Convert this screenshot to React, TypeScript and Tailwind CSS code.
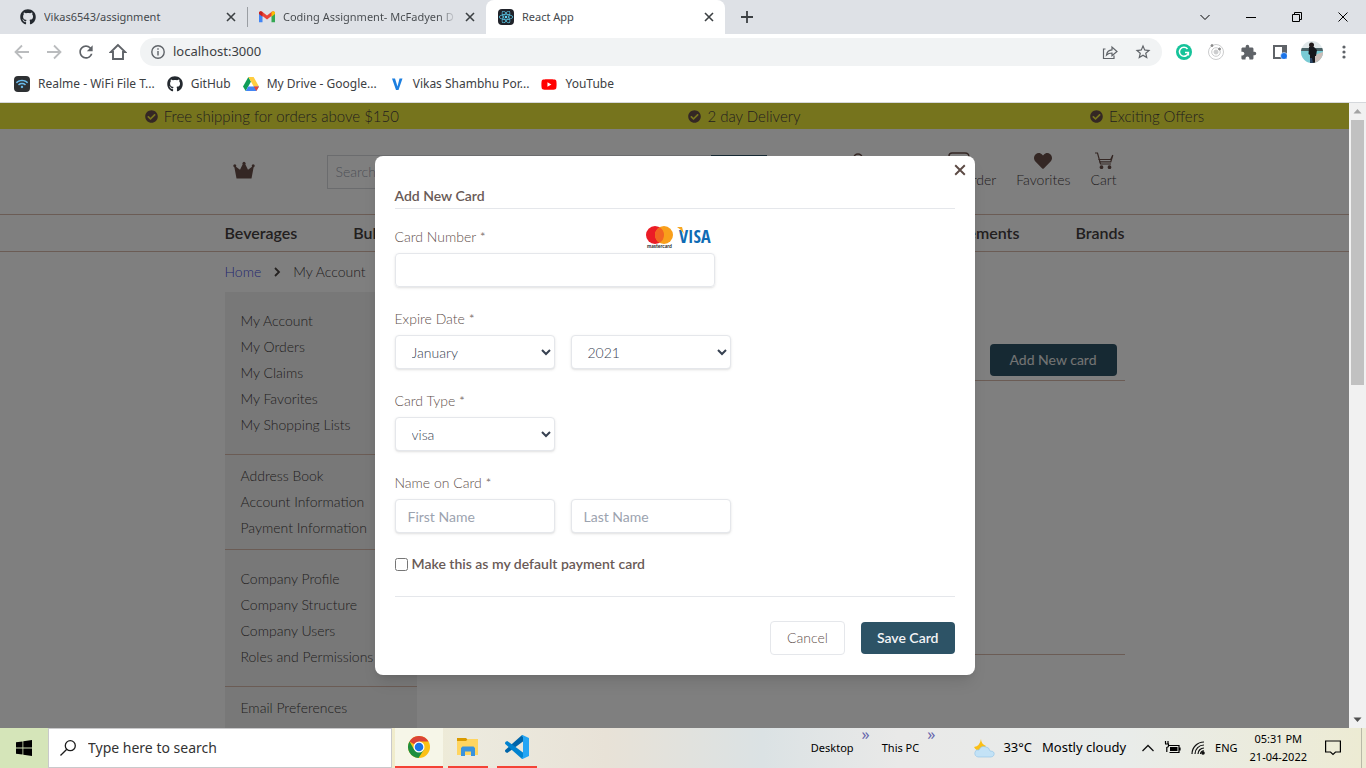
import React from "react";
import { FaCheckCircle, FaGithub, FaHeart, FaReact, FaWifi, FaYoutube } from "react-icons/fa";
import { MdExtension, MdRefresh, MdStarBorder } from "react-icons/md";

type Kids = { children?: React.ReactNode };

function GmailIcon() {
  return (
    <svg viewBox="0 0 16 12" className="h-3 w-4">
      <path d="M0 2v9.2h3.5V5z" fill="#4285f4" />
      <path d="M16 2v9.2h-3.5V5z" fill="#34a853" />
      <path d="M0 2.2C0 .3 2 0 3.2.8L8 4.5 12.8.8C14 0 16 .3 16 2.2L8 8.6z" fill="#ea4335" />
      <path d="M12.5 1v4.8L16 3V2C16 .2 14-.1 12.5 1z" fill="#fbbc04" />
      <path d="M3.5 1v4.8L0 3V2C0 .2 2-.1 3.5 1z" fill="#c5221f" />
    </svg>
  );
}

function DriveIcon() {
  return (
    <svg viewBox="0 0 16 14" className="h-3.5 w-4">
      <path d="M5.4 0 0 9.4 2.7 14 8 4.6z" fill="#0f9d58" />
      <path d="M5.4 0h5.2L16 9.4h-5.3z" fill="#ffcd40" />
      <path d="M5.3 9.4H16L13.3 14H2.7z" fill="#4285f4" />
      <path d="M10.7 9.4H16L13.3 14z" fill="#ea4335" />
    </svg>
  );
}

function ChromeIcon() {
  return (
    <svg viewBox="0 0 24 24" className="size-[22px]">
      <circle cx="12" cy="12" r="12" fill="#fbc116" />
      <path d="M12 12 1.6 6A12 12 0 0 1 22.4 6H12z" fill="#db4437" />
      <path d="M1.6 6A12 12 0 0 0 11.5 24l5.7-9H12L6.8 15z" fill="#1e8e3e" />
      <circle cx="12" cy="12" r="6" fill="#fff" />
      <circle cx="12" cy="12" r="4.7" fill="#1a73e8" />
    </svg>
  );
}

function ExplorerIcon() {
  return (
    <svg viewBox="0 0 22 20" className="h-5 w-[22px]">
      <path d="M0 1h9l2 2v3H0z" fill="#d99a00" />
      <path d="M0 4h9l2-2h10v16H0z" fill="#ffd560" />
      <path d="M4 19v-8l1.5-1.5h11L18 11v8h-4v-4.500H8V19z" fill="#3a93dd" />
    </svg>
  );
}

function CodeIcon() {
  return (
    <svg viewBox="0 0 24 24" className="size-6">
      <path d="M0 15.200 16.500.6 18 0v6.500L2.200 18 .3 17z" fill="#0065a9" />
      <path d="M0 8.800 16.500 23.400 18 24v-6.500L2.200 6 .3 7z" fill="#0082cf" />
      <path d="M17.500 0 24 3v18l-6.500 3-1-1 1.500-1V2l-1.500-1z" fill="#24a5f4" />
    </svg>
  );
}

function CrownIcon() {
  return (
    <svg viewBox="0 0 22 18" className="h-[18px] w-[22px]" fill="#694f49">
      <path d="M3.500 17.500 1 4.200 7 8.800 10.300 2h1.400L15 8.800l6-4.600-2.500 13.300z" />
      <circle cx="11" cy="2.200" r="1.500" />
      <circle cx="1.800" cy="4.700" r="1.500" />
      <circle cx="20.200" cy="4.700" r="1.500" />
    </svg>
  );
}

function CartIcon() {
  return (
    <svg viewBox="0 0 20 18" className="h-[18px] w-5" fill="none" stroke="#694f49" strokeWidth="1.200">
      <path d="M1 1h2.500l3 11H17" />
      <path d="M4.500 7.500h12.200L18.800 3M5.300 9.800h11.500l2-6.500" />
      <circle cx="7.500" cy="15.200" r="1.300" fill="#694f49" />
      <circle cx="15.500" cy="15.200" r="1.300" fill="#694f49" />
    </svg>
  );
}

function Cross({ className }: { className: string }) {
  return (
    <svg viewBox="0 0 10 10" className={className} fill="none" stroke="currentColor" strokeWidth="1.600">
      <path d="m1 1 8 8M9 1 1 9" />
    </svg>
  );
}

function Tab({ icon, title, active, fade }: { icon: React.ReactNode; title: string; active?: boolean; fade?: boolean }) {
  return (
    <div className={`flex h-[34px] w-[239px] shrink-0 items-center gap-2 pr-2.5 pl-3 text-[11px] ${active ? "rounded-t-lg bg-white" : ""}`}>
      <span className="flex size-4 shrink-0 items-center justify-center">{icon}</span>
      <span className={`flex-1 overflow-hidden whitespace-nowrap ${fade ? "bg-linear-to-r from-[#45494d] from-90% to-[#dee1e6] bg-clip-text text-transparent" : "text-[#45494d]"}`}>{title}</span>
      <button type="button" aria-label="Close tab" className="flex size-3 shrink-0 items-center justify-center text-[#3c4043]">
        <Cross className="size-2.5" />
      </button>
    </div>
  );
}

function ToolButton({ label, children }: Kids & { label: string }) {
  return (
    <button type="button" aria-label={label} className="flex h-7 w-8 shrink-0 items-center justify-center text-[#5f6368]">
      {children}
    </button>
  );
}

function Bookmark({ icon, children }: Kids & { icon: React.ReactNode }) {
  return (
    <a href="#" className="flex items-center gap-2">
      <span className="flex size-4 items-center justify-center">{icon}</span>
      {children}
    </a>
  );
}

function Browser() {
  return (
    <header className="shrink-0 border-b border-[#d5d8dc] bg-white font-['Noto_Sans','Open_Sans',sans-serif] text-xs text-[#3c4043]">
      <div className="flex h-[34px] items-center bg-[#dee1e6] pl-2">
        <Tab icon={<FaGithub className="size-4 text-[#24292f]" />} title="Vikas6543/assignment" />
        <span className="-mr-px h-5 w-px bg-[#9a9ea3]" />
        <Tab fade icon={<GmailIcon />} title="Coding Assignment- McFadyen D" />
        <Tab
          active
          icon={
            <span className="flex size-4 items-center justify-center rounded-sm bg-[#20232a]">
              <FaReact className="size-3.5 text-[#61dafb]" />
            </span>
          }
          title="React App"
        />
        <button type="button" aria-label="New tab" className="ml-4 flex size-3 items-center justify-center text-[#3c4043]">
          <svg viewBox="0 0 12 12" className="size-3" stroke="currentColor" strokeWidth="1.800">
            <path d="M6 0v12M0 6h12" />
          </svg>
        </button>
        <div className="ml-auto flex h-7 text-black">
          {[
            ["Search tabs", "m.500 3 4.500 4.500L9.500 3"],
            ["Minimize", "M0 5.500h10"],
            ["Restore", "M.500 2.500h7v7h-7zM2.500 2.500v-2h7v7h-2"],
            ["Close", "m.500.500 9 9M9.500.500l-9 9"],
          ].map(([label, d]) => (
            <button key={label} type="button" aria-label={label} className="flex w-[46px] items-center justify-center">
              <svg viewBox="0 0 10 10" className="size-2.5 overflow-visible" fill="none" stroke="currentColor">
                <path d={d} />
              </svg>
            </button>
          ))}
        </div>
      </div>

      <div className="flex h-9 items-center px-1.5">
        <ToolButton label="Back">
          <svg viewBox="0 0 16 16" className="size-4" fill="none" stroke="#babcbe" strokeWidth="1.800"><path d="M15 8H2M8 1.500 1.500 8 8 14.500" /></svg>
        </ToolButton>
        <ToolButton label="Forward">
          <svg viewBox="0 0 16 16" className="size-4" fill="none" stroke="#babcbe" strokeWidth="1.800"><path d="M1 8h13M8 1.500 14.500 8 8 14.500" /></svg>
        </ToolButton>
        <ToolButton label="Reload"><MdRefresh className="size-5" /></ToolButton>
        <ToolButton label="Home">
          <svg viewBox="0 0 18 18" className="size-[18px]" fill="none" stroke="currentColor" strokeWidth="1.900"><path d="M9 2 1.800 9H4v7h10V9h2.200z" /></svg>
        </ToolButton>
        <div className="mx-1.5 flex h-7 flex-1 items-center rounded-full bg-[#f1f3f4] pr-2.5 pl-[11px]">
          <svg viewBox="0 0 14 14" className="size-3.5" fill="none" stroke="#5f6368" strokeWidth="1.400"><circle cx="7" cy="7" r="6.200" /><path d="M7 6v4.500M7 3.300v1.500" /></svg>
          <input aria-label="Address" className="ml-2 flex-1 bg-transparent text-[13px] text-[#3c4043] outline-none" defaultValue="localhost:3000" />
          <button type="button" aria-label="Share" className="mr-4">
            <svg viewBox="0 0 16 16" className="size-4" fill="none" stroke="#5f6368" strokeWidth="1.200"><path d="M3.500 5H1.500v9.500h10.500v-3M4.500 11c.500-3.500 2.500-5 5.500-5.200V3l5 4.500-5 4.300V9c-2.500 0-4 .5-5.500 2z" /></svg>
          </button>
          <button type="button" aria-label="Bookmark"><MdStarBorder className="size-[18px] text-[#5f6368]" /></button>
        </div>
        <ToolButton label="Grammar extension">
          <svg viewBox="0 0 16 16" className="size-4"><circle cx="8" cy="8" r="8" fill="#15c39a" /><path d="M11.500 5A4.500 4.500 0 1 0 12.400 8.500H9M12.400 8.500v3" fill="none" stroke="#fff" strokeWidth="1.500" /></svg>
        </ToolButton>
        <ToolButton label="Orbit extension">
          <svg viewBox="0 0 16 16" className="size-4" fill="none" stroke="#cbcccd"><circle cx="8" cy="8" r="7.500" /><circle cx="8" cy="8" r="4.300" /><circle cx="8" cy="8" r="2" fill="#cbcccd" /><circle cx="4" cy="1.600" r="1" fill="#888" stroke="#888" /><circle cx="11.500" cy="5" r="1" fill="#888" stroke="#888" /></svg>
        </ToolButton>
        <ToolButton label="Extensions"><MdExtension className="size-[17px]" /></ToolButton>
        <ToolButton label="Side panel">
          <svg viewBox="0 0 14 14" className="size-3.5"><path d="M1 1h12v12H1z" fill="none" stroke="#5f6368" strokeWidth="2" /><path d="M9 0h5v9H9z" fill="#5f6368" /><circle cx="11" cy="11" r="3.500" fill="#1a73e8" stroke="#fff" strokeWidth=".6" /></svg>
        </ToolButton>
        <ToolButton label="Profile">
          <svg viewBox="0 0 22 22" className="size-[22px] rounded-full">
            <path d="M0 0h22v22H0z" fill="#dfe7e9" /><path d="M0 7h22v4H0z" fill="#4a6266" /><path d="M0 10h22v12H0z" fill="#79cbd4" /><path d="m11 15 11-4v11H12z" fill="#cbbdb8" />
            <circle cx="10.500" cy="4" r="2.500" fill="#20191a" /><path d="M8 6h5l3 3-1 6h-1v7H9v-8l-1.500-1z" fill="#15171c" /><path d="M9 17h2l1 5H9z" fill="#2b4565" />
          </svg>
        </ToolButton>
        <ToolButton label="Menu">
          <svg viewBox="0 0 4 14" className="h-3.5 w-1" fill="currentColor"><circle cx="2" cy="2" r="1.600" /><circle cx="2" cy="7" r="1.600" /><circle cx="2" cy="12" r="1.600" /></svg>
        </ToolButton>
      </div>

      <nav className="flex h-8 items-center gap-3 pb-1 pl-3.5">
        <Bookmark icon={<span className="flex size-4 items-center justify-center rounded-sm bg-[#2d3033]"><FaWifi className="size-3 text-[#69b9ea]" /></span>}>Realme - WiFi File T...</Bookmark>
        <Bookmark icon={<FaGithub className="size-4 text-[#24292f]" />}>GitHub</Bookmark>
        <Bookmark icon={<DriveIcon />}>My Drive - Google...</Bookmark>
        <Bookmark icon={<svg viewBox="0 0 16 16" className="size-4"><path d="M3 2.500h3l2.500 8 2-8h3L9.500 14H7z" fill="#1c7fe0" /></svg>}>Vikas Shambhu Por...</Bookmark>
        <Bookmark icon={<FaYoutube className="size-[17px] text-[#f00]" />}>YouTube</Bookmark>
      </nav>
    </header>
  );
}

const offers = ["Free shipping for orders above $150", "2 day Delivery", "Exciting Offers"];

const sections = [
  { items: ["My Account", "My Orders", "My Claims", "My Favorites", "My Shopping Lists"], roomy: true },
  { items: ["Address Book", "Account Information", "Payment Information"], roomy: false },
  { items: ["Company Profile", "Company Structure", "Company Users", "Roles and Permissions"], roomy: true },
  { items: ["Email Preferences"], roomy: false },
];

function HeaderLink({ icon, children }: Kids & { icon: React.ReactNode }) {
  return (
    <a href="#" className="flex flex-col items-center leading-5">
      <span className="flex h-[19px] items-center">{icon}</span>
      {children}
    </a>
  );
}

function Store() {
  return (
    <div className="text-sm font-light text-[#45403e]">
      <div className="flex h-[26px] items-center justify-around bg-[#ede93a] text-[15px] leading-5">
        {offers.map((offer) => (
          <span key={offer} className="flex items-center gap-1.5">
            <FaCheckCircle className="size-[13px] text-[#694f49]" />
            {offer}
          </span>
        ))}
      </div>

      <div className="mx-auto flex h-[85px] w-[900px] items-start pt-[22px] pr-2">
        <a href="#" aria-label="Store home" className="mt-2.5 ml-2"><CrownIcon /></a>
        <form className="mt-1 ml-[72px] flex h-[34px] w-[440px]">
          <input aria-label="Search products" placeholder="Search" className="flex-1 border border-[#d6d8dc] px-2 placeholder:text-[#9ca3af]" />
          <button type="button" aria-label="Search" className="w-14 bg-[#2d5366]" />
        </form>
        <div className="ml-auto flex gap-5">
          <div className="mr-6"><HeaderLink icon={<svg viewBox="0 0 18 18" className="size-[18px]" fill="none" stroke="#694f49" strokeWidth="1.600"><circle cx="9" cy="6" r="4" /><path d="M2 17c0-7 14-7 14 0" /></svg>}>Sign In</HeaderLink></div>
          <HeaderLink icon={<svg viewBox="0 0 22 18" className="h-[18px] w-[22px]" fill="none" stroke="#694f49" strokeWidth="1.400"><path d="M1 4q0-3 3-3h13q4 0 4 4v12H5V4" /></svg>}>Quick Order</HeaderLink>
          <HeaderLink icon={<FaHeart className="size-[18px] text-[#694f49]" />}>Favorites</HeaderLink>
          <HeaderLink icon={<CartIcon />}>Cart</HeaderLink>
        </div>
      </div>

      <nav className="border-y border-[#d6b8aa]">
        <div className="mx-auto flex h-9 w-[900px] items-center justify-between text-base font-semibold">
          <div className="flex gap-14"><a href="#">Beverages</a><a href="#">Bulk Foods</a></div>
          <div className="flex gap-14"><a href="#">Supplements</a><a href="#">Brands</a></div>
        </div>
      </nav>

      <div className="mx-auto w-[900px]">
        <div className="flex h-10 items-center gap-3">
          <a href="#" className="text-[#4a4fe0]">Home</a>
          <svg viewBox="0 0 8 10" className="h-2.5 w-2" fill="none" stroke="#4a4442" strokeWidth="1.800"><path d="m2 1 4 4-4 4" /></svg>
          <span>My Account</span>
        </div>
        <div className="flex">
          <aside className="w-48 shrink-0 divide-y divide-[#d6b8aa] bg-[#f0f0f0]">
            {sections.map((section) => (
              <ul key={section.items[0]} className={section.roomy ? "py-4" : "py-2"}>
                {section.items.map((item) => (
                  <li key={item} className="px-4 leading-[26px] whitespace-nowrap"><a href="#">{item}</a></li>
                ))}
              </ul>
            ))}
          </aside>
          <main className="ml-8 flex-1 pt-[52px]">
            <div className="flex justify-end border-b border-[#d6b8aa] pr-2 pb-1">
              <button type="button" className="h-8 rounded bg-[#2d5366] px-5 font-normal text-[#e8e8e8]">Add New card</button>
            </div>
            <div className="h-[274px] border-b border-[#d6b8aa]" />
          </main>
        </div>
      </div>
    </div>
  );
}

const control = "h-[34px] w-40 rounded border border-[#e5e7eb] bg-white shadow-sm outline-none";

function CardDialog() {
  return (
    <section role="dialog" aria-labelledby="dialog-title" className="relative w-[600px] rounded-lg bg-white px-5 pt-[30px] pb-5 text-sm leading-5 font-light text-[#5f514d] shadow-lg">
      <button type="button" aria-label="Close" className="absolute top-2 right-[9px] text-[#5c4a45]">
        <Cross className="size-3" />
      </button>
      <h2 id="dialog-title" className="border-b border-[#e5e7eb] pb-0.5 font-semibold text-[#695a56]">Add New Card</h2>

      <form className="mt-[18px] flex flex-col">
        <div className="flex w-80 flex-col gap-1.5">
          <div className="flex items-center justify-between">
            <label htmlFor="number">Card Number *</label>
            <svg viewBox="0 0 70 24" className="-my-1 h-6 w-[70px]">
              <circle cx="10" cy="10" r="9" fill="#eb1c26" /><circle cx="19" cy="10" r="9" fill="#f99f1b" />
              <path d="M14.500 2.200a9 9 0 0 1 0 15.600 9 9 0 0 1 0-15.600" fill="#f26522" />
              <text x="2" y="23" fontSize="5" fontWeight="700" fill="#222">mastercard</text>
              <text x="34" y="18" fontSize="18" fontWeight="700" fontFamily="Liberation Sans Narrow, Open Sans Condensed, Noto Sans" fill="#0e6bb4">VISA</text>
              <path d="M32 2h5l2 7q-2-4-7-7" fill="#f7a823" />
            </svg>
          </div>
          <input id="number" className="h-[34px] rounded border border-[#e5e7eb] px-3 shadow-sm outline-none" />
        </div>

        <fieldset className="mt-[22px]">
          <legend className="pb-1.5">Expire Date *</legend>
          <div className="flex gap-4">
            <select aria-label="Month" className={`${control} pl-3 text-[#374151]`}><option>January</option><option>February</option></select>
            <select aria-label="Year" className={`${control} pl-3 text-[#374151]`}><option>2021</option><option>2022</option></select>
          </div>
        </fieldset>

        <div className="mt-[22px] flex flex-col gap-1.5">
          <label htmlFor="type">Card Type *</label>
          <select id="type" className={`${control} pl-3 text-[#374151]`}><option>visa</option><option>mastercard</option></select>
        </div>

        <fieldset className="mt-[22px]">
          <legend className="pb-1.5">Name on Card *</legend>
          <div className="flex gap-4">
            <input aria-label="First name" placeholder="First Name" className={`${control} px-3 font-normal placeholder:text-[#9ca3af]`} />
            <input aria-label="Last name" placeholder="Last Name" className={`${control} px-3 font-normal placeholder:text-[#9ca3af]`} />
          </div>
        </fieldset>

        <label className="mt-[21px] flex items-center gap-1 font-semibold text-[#695a56]">
          <input type="checkbox" className="size-[13px]" />
          Make this as my default payment card
        </label>

        <div className="mt-[22px] flex items-center justify-end gap-4 border-t border-[#e5e7eb] pt-6">
          <button type="button" className="h-[34px] rounded border border-[#e5e7eb] px-4">Cancel</button>
          <button type="button" className="h-8 rounded bg-[#2d5366] px-4 font-semibold text-[#f3f4f6]">Save Card</button>
        </div>
      </form>
    </section>
  );
}

function Scrollbar() {
  return (
    <div aria-hidden="true" className="flex w-[17px] shrink-0 flex-col items-center bg-[#f1f1f1]">
      <svg viewBox="0 0 17 17" className="size-[17px]" fill="#a3a3a3"><path d="m8.500 6 4 4.500h-8z" /></svg>
      <div className="h-[265px] w-[13px] bg-[#c1c1c1]" />
      <svg viewBox="0 0 17 17" className="mt-auto size-[17px]" fill="#505050"><path d="m8.500 11 4-4.500h-8z" /></svg>
    </div>
  );
}

function Taskbar() {
  return (
    <footer className="flex h-10 shrink-0 items-stretch bg-[#d5e5b9] font-['Noto_Sans','Open_Sans',sans-serif] text-[11px] text-black">
      <button type="button" aria-label="Start" className="flex w-12 items-center justify-center">
        <svg viewBox="0 0 16 16" className="size-4"><path d="M0 2.300 6.500 1.400v6.200H0zM7.300 1.300 16 0v7.600H7.300zM0 8.400h6.500v6.200L0 13.700zM7.300 8.400H16V16l-8.700-1.300z" /></svg>
      </button>
      <label className="flex w-[344px] items-center gap-3 border border-[#c9c9cb] bg-white pl-[11px]">
        <svg viewBox="0 0 16 16" className="size-4" fill="none" stroke="#1c1c1c" strokeWidth="1.300"><circle cx="10.300" cy="5.700" r="5" /><path d="M6.800 9.200.500 15.500" /></svg>
        <input aria-label="Search" placeholder="Type here to search" className="flex-1 text-sm outline-none placeholder:text-[#333]" />
      </label>
      <div className="flex flex-1 items-stretch bg-[linear-gradient(90deg,#f0eccb_0%,#eceade_8%,#e8e2d7_22%,#dbe2e4_38%,#e9e9e8_52%,#e9ecea_75%,#edebd3_100%)] pl-[3px]">
        <button type="button" aria-label="Chrome" className="flex w-12 items-center justify-center border-b-2 border-[#f44336] bg-[#f6f6e8]"><ChromeIcon /></button>
        <button type="button" aria-label="File Explorer" className="ml-[5px] flex w-10 items-center justify-center border-b-2 border-[#f44336]"><ExplorerIcon /></button>
        <button type="button" aria-label="Code editor" className="ml-[9px] flex w-10 items-center justify-center border-b-2 border-[#f44336]"><CodeIcon /></button>
        <div className="ml-auto flex items-center">
          <span>Desktop</span>
          <span className="mx-2 self-start text-base leading-3 text-[#6666ac]">»</span>
          <span className="ml-1">This PC</span>
          <span className="mx-2 self-start text-base leading-3 text-[#6666ac]">»</span>
          <svg viewBox="0 0 22 20" className="mr-2 ml-[30px] h-5 w-[22px]"><path d="M8 1q0 5 5 7l-5 5q-5 0-7-4 6-1 7-8" fill="#fbbf16" /><path d="M5 19q-4-1-3-5 1-3 4-2 2-5 7-3 3 0 4 4 5 0 4 4-1 2-3 2z" fill="#c3e2f6" stroke="#8fc3e8" strokeWidth=".6" /></svg>
          <span className="text-[13px]">33°C</span>
          <span className="ml-2.5 text-[13px]">Mostly cloudy</span>
          <svg viewBox="0 0 12 8" className="ml-4 h-2 w-3" fill="none" stroke="#111" strokeWidth="1.300"><path d="m.500 7 5.500-5.500L11.500 7" /></svg>
          <svg viewBox="0 0 17 14" className="ml-2.5 h-3.5 w-[17px]"><path d="M4 4.500h11v7H5.500M16 6.500v3M1.500 0v2.500M4 0v2.500M1 3h3.500v2q0 1-1.700 1.500V11" fill="none" stroke="#000" strokeWidth="1.200" /><path d="M6 6h7.500v4H6z" /></svg>
          <svg viewBox="0 0 14 14" className="ml-2.5 size-3.5" fill="none" stroke="#111" strokeWidth="1.200"><path d="M1 13A12 12 0 0 1 13 1M4 13a9 9 0 0 1 9-9M7 13a6 6 0 0 1 6-6" /><circle cx="12" cy="12" r="1.200" fill="#111" /><path d="M9.500 13A3 3 0 0 1 13 10" /></svg>
          <span className="ml-2.5">ENG</span>
          <span className="ml-3 flex flex-col items-center leading-[18px]"><span>05:31 PM</span><span>21-04-2022</span></span>
          <svg viewBox="0 0 16 16" className="mr-5 ml-[18px] size-4" fill="none" stroke="#000" strokeWidth="1.200"><path d="M.6 1h14.800v11H10.500L8 14.500 5.500 12H.6z" /></svg>
          <span className="mr-1 h-10 w-px bg-[#b9b9a8]" />
        </div>
      </div>
    </footer>
  );
}

export default function App() {
  return (
    <div className="flex h-screen flex-col overflow-hidden">
      <Browser />
      <div className="flex min-h-0 flex-1">
        <div className="relative flex-1 overflow-hidden bg-white font-['Lato',sans-serif]">
          <Store />
          <div className="absolute inset-0 flex items-center justify-center bg-black/50">
            <CardDialog />
          </div>
        </div>
        <Scrollbar />
      </div>
      <Taskbar />
    </div>
  );
}
